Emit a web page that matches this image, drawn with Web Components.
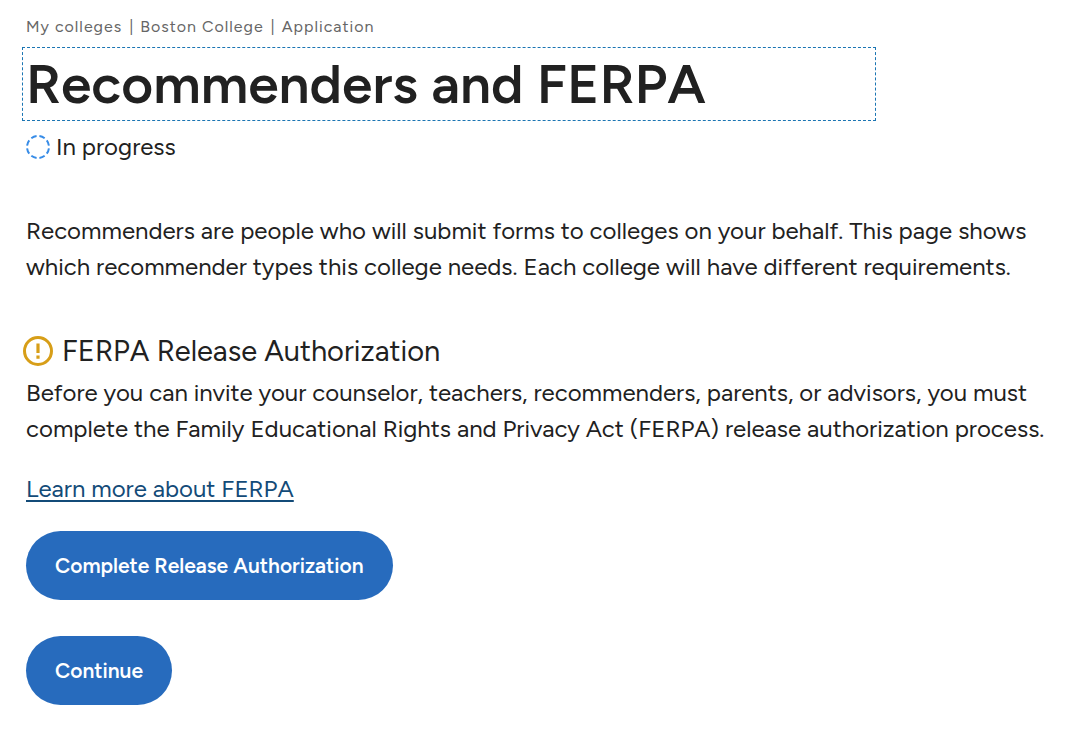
<!DOCTYPE html>
<html lang="en">
<head>
<meta charset="utf-8">
<meta name="viewport" content="width=device-width, initial-scale=1">
<title>Recommenders and FERPA</title>
<style>
body { margin: 0; background: #fff; color: #212121; font-family: Figtree, Lato, sans-serif; font-size: 24px; line-height: 36px; }
</style>
</head>
<body>
<recommenders-page></recommenders-page>
<script>
class Base extends HTMLElement {
  constructor() {
    super();
    this.attachShadow({ mode: 'open' }).innerHTML = this.constructor.markup;
  }
}

class BreadCrumbs extends Base {
  static markup = `
    <style>
      :host { display: block; color: #666; font-size: 16px; line-height: 24px; letter-spacing: 1px; }
      ::slotted(i) { font-style: normal; margin: 0 1px 0 2px; }
    </style>
    <slot></slot>`;
}

class PageTitle extends Base {
  static markup = `
    <style>
      :host { display: block; }
      h1 { margin: 0; width: 83%; font-size: 55px; line-height: 66px; font-weight: 600; outline: 1px dashed #1b75b3; outline-offset: 3px; }
    </style>
    <h1><slot></slot></h1>`;
}

class ProgressStatus extends Base {
  static markup = `
    <style>
      :host { display: flex; align-items: center; gap: 6px; }
      svg { flex: none; }
    </style>
    <svg width="24" height="24" viewBox="0 0 24 24" fill="none" stroke="#378ce7" stroke-width="2" aria-hidden="true">
      <circle cx="12" cy="12" r="11" pathLength="80" stroke-dasharray="6.6 3.4" stroke-dashoffset="-1.7"/>
    </svg>
    <span><slot></slot></span>`;
}

class AlertHeading extends Base {
  static markup = `
    <style>
      :host { display: flex; align-items: center; gap: 9px; margin-left: -3px; }
      svg { flex: none; }
      h2 { margin: 0; font-size: 29px; line-height: 42px; font-weight: 400; }
    </style>
    <svg width="30" height="30" viewBox="0 0 30 30" fill="none" aria-hidden="true">
      <circle cx="15" cy="15" r="13.5" stroke="#d79e18" stroke-width="3"/>
      <path d="M13.4 7.5h3.2v9.5h-3.2zM13.4 19.5h3.2v3.2h-3.2z" fill="#d79e18"/>
    </svg>
    <h2><slot></slot></h2>`;
}

class TextLink extends Base {
  static markup = `
    <style>
      :host { display: block; }
      a { color: #134b78; text-decoration: underline; text-decoration-thickness: 2px; text-underline-offset: 3px; text-decoration-skip-ink: none; }
    </style>
    <a href="#ferpa"><slot></slot></a>`;
}

class PillButton extends Base {
  static markup = `
    <style>
      :host { display: block; }
      button { display: block; border: 0; margin: 0; padding: 18px 29px; border-radius: 35px; background: #276bbd; color: #fff; font: inherit; font-weight: 600; font-size: 21px; line-height: 33px; cursor: pointer; }
    </style>
    <button type="button"><slot></slot></button>`;
}

class RecommendersPage extends Base {
  static markup = `
    <style>
      :host { display: block; }
      main { padding: 15px 26px 36px; }
      p { margin: 0; }
      page-title { margin-top: 12px; }
      progress-status { margin-top: 12px; }
      .intro { margin-top: 48px; }
      alert-heading { margin-top: 45px; }
      .ferpa { margin-top: 3px; }
      text-link, pill-button { margin-top: 24px; }
      .next { margin-top: 36px; }
    </style>
    <main>
      <bread-crumbs>My colleges <i>|</i> Boston College <i>|</i> Application</bread-crumbs>
      <page-title>Recommenders and FERPA</page-title>
      <progress-status>In progress</progress-status>
      <p class="intro">Recommenders are people who will submit forms to colleges on your behalf. This page shows which recommender types this college needs. Each college will have different requirements.</p>
      <alert-heading>FERPA Release Authorization</alert-heading>
      <p class="ferpa">Before you can invite your counselor, teachers, recommenders, parents, or advisors, you must complete the Family Educational Rights and Privacy Act (FERPA) release authorization process.</p>
      <text-link>Learn more about FERPA</text-link>
      <pill-button>Complete Release Authorization</pill-button>
      <pill-button class="next">Continue</pill-button>
    </main>`;
}

customElements.define('bread-crumbs', BreadCrumbs);
customElements.define('page-title', PageTitle);
customElements.define('progress-status', ProgressStatus);
customElements.define('alert-heading', AlertHeading);
customElements.define('text-link', TextLink);
customElements.define('pill-button', PillButton);
customElements.define('recommenders-page', RecommendersPage);
</script>
</body>
</html>
